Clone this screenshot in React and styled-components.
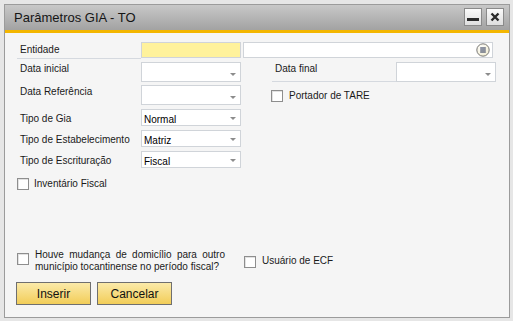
import styled, { createGlobalStyle } from "styled-components";

const GlobalStyle = createGlobalStyle`
  html, body {
    margin: 0;
    padding: 0;
    background: #e4e4e4;
    font-family: "Liberation Sans", Arial, sans-serif;
  }
`;

const Frame = styled.div`
  width: 513px;
  height: 321px;
  box-sizing: border-box;
  padding: 4px 3px 3px 4px;
  background: #e6e6e6;
`;

const Window = styled.div`
  height: 100%;
  box-sizing: border-box;
  border: 1px solid #9b9b9b;
  display: flex;
  flex-direction: column;
  background: #f5f5f5;
`;

const TitleBar = styled.div`
  height: 25px;
  display: flex;
  align-items: flex-start;
  padding: 0 5px 0 9px;
  background: linear-gradient(#c8c8c8, #a2a2a2);
  border-bottom: 3px solid #f3b600;
`;

const Title = styled.div`
  flex: 1;
  font-size: 13px;
  line-height: 25px;
  color: #151515;
`;

const TitleButton = styled.button`
  width: 18px;
  height: 18px;
  margin: 3px 0 0 ${(p) => p.$gap || 0}px;
  padding: 0;
  border: 1px solid #8a8a8a;
  background: linear-gradient(#fafafa, #dedede);
  display: flex;
  align-items: center;
  justify-content: center;
`;

const Body = styled.div`
  flex: 1;
  display: flex;
  flex-direction: column;
  padding: 9px 0 0 12px;
  font-size: 10px;
  color: #1a1a1a;
`;

const Row = styled.div`
  display: flex;
  align-items: flex-start;
  height: ${(p) => p.$h}px;
  margin-top: ${(p) => p.$mt || 0}px;
`;

const Label = styled.div`
  width: ${(p) => p.$w || 124}px;
  height: 100%;
  box-sizing: border-box;
  padding: ${(p) => p.$pt || 0}px 0 0 3px;
  margin-left: ${(p) => p.$ml || 0}px;
  line-height: 13px;
  border-bottom: 1px solid ${(p) => (p.$line ? "#d5d9df" : "transparent")};
  white-space: nowrap;
`;

const Field = styled.div`
  position: relative;
  width: ${(p) => p.$w || 100}px;
  height: ${(p) => p.$h}px;
  margin-left: ${(p) => p.$ml || 0}px;
  box-sizing: border-box;
  border: 1px solid #d0d4d9;
  background: ${(p) => (p.$yellow ? "#fff29c" : "#ffffff")};
  padding: ${(p) => p.$pt || 0}px 0 0 2px;
  line-height: 13px;
  color: #000;
`;

const Arrow = styled.span`
  position: absolute;
  right: 4px;
  top: ${(p) => p.$top}px;
  width: 0;
  height: 0;
  border-left: 3px solid transparent;
  border-right: 3px solid transparent;
  border-top: 3px solid #8c8c8c;
`;

const LinkIcon = styled.svg`
  position: absolute;
  right: 2px;
  top: 0px;
`;

const Check = styled.span`
  display: inline-block;
  flex: none;
  width: 12px;
  height: 12px;
  box-sizing: border-box;
  border: 1px solid #8e8e8e;
  background: #fff;
  box-shadow: inset 1px 1px 0 #e2e2e2;
  margin: ${(p) => p.$m || "0"};
`;

const CheckText = styled.span`
  line-height: ${(p) => p.$lh || 12}px;
  margin-left: ${(p) => p.$gap}px;
  white-space: nowrap;
`;

const Paragraph = styled.div`
  width: 190px;
  margin-left: 6px;
  line-height: 12px;
  text-align: justify;
  text-align-last: left;
`;

const Buttons = styled.div`
  display: flex;
  gap: 6px;
  margin: 9px 0 0 -1px;
`;

const Button = styled.button`
  width: 75px;
  height: 23px;
  padding: 0;
  border: 1px solid #6f6f6f;
  background: linear-gradient(#fbeaa9, #f2cd58);
  font-family: "Liberation Sans", Arial, sans-serif;
  font-size: 12px;
  color: #111;
`;

const Dropdown = ({ text, h = 20, arrowTop = 10, pt = 3, ml }) => (
  <Field $h={h} $pt={pt} $ml={ml}>
    {text}
    <Arrow $top={arrowTop} />
  </Field>
);

export default function App() {
  return (
    <Frame>
      <GlobalStyle />
      <Window>
        <TitleBar>
          <Title>Parâmetros GIA - TO</Title>
          <TitleButton>
            <svg width="14" height="14" viewBox="0 0 14 14">
              <rect x="1" y="8" width="12" height="3" fill="#2a2a2a" />
            </svg>
          </TitleButton>
          <TitleButton $gap={4}>
            <svg width="12" height="12" viewBox="0 0 12 12">
              <path d="M2.5 2.5 L9.5 9.5 M9.5 2.5 L2.5 9.5" stroke="#2a2a2a" strokeWidth="2.4" />
            </svg>
          </TitleButton>
        </TitleBar>
        <Body>
          <Row $h={17}>
            <Label $pt={1} $line>Entidade</Label>
            <Field $h={16} $yellow />
            <Field $h={16} $w={250} $ml={2}>
              <LinkIcon width="14" height="14" viewBox="0 0 14 14">
                <defs>
                  <radialGradient id="lk" cx="0.4" cy="0.35" r="0.7">
                    <stop offset="0" stopColor="#ffffff" />
                    <stop offset="1" stopColor="#f1ecd0" />
                  </radialGradient>
                </defs>
                <circle cx="7" cy="7" r="6.2" fill="url(#lk)" stroke="#6a6a6a" strokeWidth="0.9" />
                <path d="M4.2 5 H9.8 M4.2 7 H9.8 M4.2 9 H9.8" stroke="#1e2a4a" strokeWidth="1.2" />
              </LinkIcon>
            </Field>
          </Row>
          <Row $h={20} $mt={3}>
            <Label $pt={0}>Data inicial</Label>
            <Dropdown />
            <Label $ml={31} $line>Data final</Label>
            <Dropdown />
          </Row>
          <Row $h={20} $mt={3}>
            <Label $pt={0}>Data Referência</Label>
            <Dropdown />
            <Check $m="5px 0 0 30px" />
            <CheckText $gap={6} $lh={22}>Portador de TARE</CheckText>
          </Row>
          <Row $h={17} $mt={4}>
            <Label $pt={3}>Tipo de Gia</Label>
            <Dropdown h={17} pt={3} arrowTop={7} text="Normal" />
          </Row>
          <Row $h={17} $mt={4}>
            <Label $pt={3}>Tipo de Estabelecimento</Label>
            <Dropdown h={17} pt={3} arrowTop={7} text="Matriz" />
          </Row>
          <Row $h={17} $mt={4}>
            <Label $pt={3}>Tipo de Escrituração</Label>
            <Dropdown h={17} pt={3} arrowTop={7} text="Fiscal" />
          </Row>
          <Row $h={12} $mt={10}>
            <Check />
            <CheckText $gap={5}>Inventário Fiscal</CheckText>
          </Row>
          <Row $h={24} $mt={59}>
            <Check $m="4px 0 0 0" />
            <Paragraph>
              Houve mudança de domicílio para outro município tocantinense no período fiscal?
            </Paragraph>
            <Check $m="7px 0 0 19px" />
            <CheckText $gap={6} $lh={24}>Usuário de ECF</CheckText>
          </Row>
          <Buttons>
            <Button>Inserir</Button>
            <Button>Cancelar</Button>
          </Buttons>
        </Body>
      </Window>
    </Frame>
  );
}
